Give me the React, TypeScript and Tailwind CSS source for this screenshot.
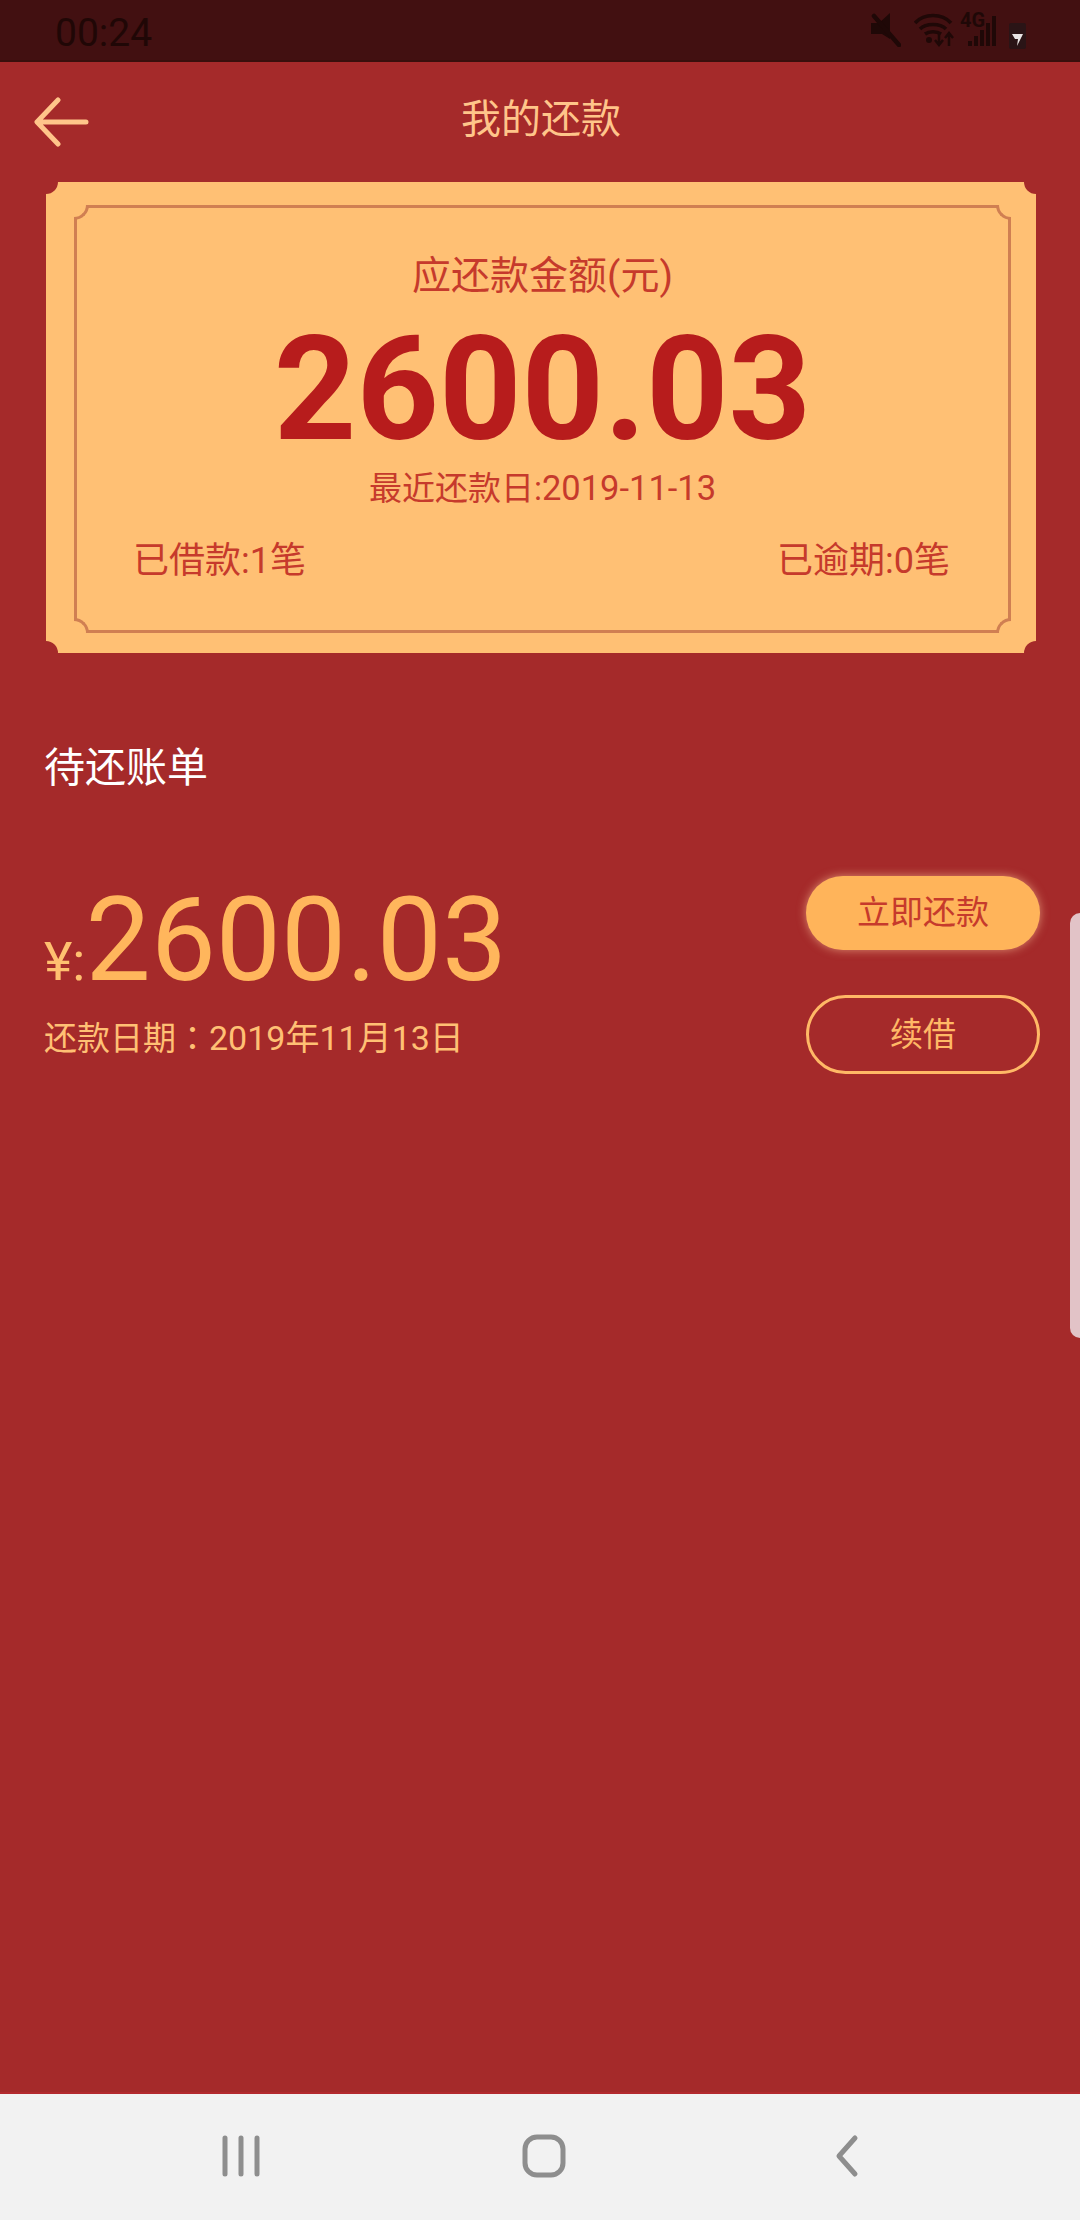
const fontStack = "font-['Roboto','Noto_Sans_CJK_SC',sans-serif]";

function StatusIcons() {
  return (
    <div className="flex items-center">
      {/* muted speaker */}
      <svg width="30" height="34" viewBox="0 0 30 34" className="mr-[13px]">
        <path d="M0 10h8l11-10v26l-8-5H0z" fill="#1f0807" />
        <path d="M3 3l25 29" stroke="#1f0807" strokeWidth="4.5" strokeLinecap="round" />
      </svg>
      {/* wifi with data arrows */}
      <svg width="40" height="34" viewBox="0 0 40 34" className="mr-[6px]">
        <path d="M1 10C10 0 28 0 37 10M6 16c6-6 20-6 26 0M11 21c4-3 12-3 16 0" fill="none" stroke="#1f0807" strokeWidth="3.5" />
        <circle cx="15" cy="27" r="3" fill="#1f0807" />
        <path d="M25 20v11M21 27l4 5 4-5M35 33V21M31 25l4-5 4 5" fill="none" stroke="#1f0807" strokeWidth="2.5" />
      </svg>
      {/* 4G and signal bars */}
      <div className="relative mr-[13px] h-[32px] w-[36px]">
        <span className="absolute left-0 top-[-3px] text-[20px] font-bold leading-[18px] text-[#1f0807]">4G</span>
        <svg width="36" height="32" viewBox="0 0 36 32" className="absolute left-0 top-0">
          <path d="M8 32v-5h4v5zM14 32V22h4v10zM20 32V16h4v16zM26 32V9h4v23zM32 32V2h4v30z" fill="#1f0807" />
        </svg>
      </div>
      {/* battery, charging */}
      <div className="mt-[12px] flex h-[26px] w-[17px] items-end justify-center rounded-[2px] bg-[#2a1416] pb-[2px]">
        <svg width="11" height="14" viewBox="0 0 11 14">
          <path d="M0 1h11L5 13l1-7H3z" fill="#e8e4e4" />
        </svg>
      </div>
    </div>
  );
}

function OuterNotches() {
  return (
    <>
      <div className="absolute left-0 top-0 h-[12px] w-[12px] rounded-br-[12px] bg-[#a52a2a]" />
      <div className="absolute right-0 top-0 h-[12px] w-[12px] rounded-bl-[12px] bg-[#a52a2a]" />
      <div className="absolute bottom-0 left-0 h-[12px] w-[12px] rounded-tr-[12px] bg-[#a52a2a]" />
      <div className="absolute bottom-0 right-0 h-[12px] w-[12px] rounded-tl-[12px] bg-[#a52a2a]" />
    </>
  );
}

function FrameNotches() {
  return (
    <>
      <div className="absolute left-[-3px] top-[-3px] h-[15px] w-[15px] rounded-br-[15px] border-b-[3px] border-r-[3px] border-[#d07f52] bg-[#ffc074]" />
      <div className="absolute right-[-3px] top-[-3px] h-[15px] w-[15px] rounded-bl-[15px] border-b-[3px] border-l-[3px] border-[#d07f52] bg-[#ffc074]" />
      <div className="absolute bottom-[-3px] left-[-3px] h-[15px] w-[15px] rounded-tr-[15px] border-r-[3px] border-t-[3px] border-[#d07f52] bg-[#ffc074]" />
      <div className="absolute bottom-[-3px] right-[-3px] h-[15px] w-[15px] rounded-tl-[15px] border-l-[3px] border-t-[3px] border-[#d07f52] bg-[#ffc074]" />
    </>
  );
}

export default function App() {
  return (
    <div className={`relative flex h-[2220px] w-[1080px] flex-col overflow-hidden bg-[#a52a2a] ${fontStack}`}>
      {/* status bar */}
      <div className="flex h-[62px] items-center justify-between border-b-2 border-[#3a0f0c] bg-[#421011] pl-[55px] pr-[54px]">
        <span className="mt-[6px] text-[39px] leading-[56px] text-[#200706]">00:24</span>
        <StatusIcons />
      </div>

      {/* title bar */}
      <div className="relative flex h-[120px] items-start justify-center">
        <svg width="56" height="50" viewBox="0 0 56 50" className="absolute left-[34px] top-[35px]">
          <path d="M52 25H4M24 3L3 25l21 22" fill="none" stroke="#ffc58a" strokeWidth="5" strokeLinecap="round" strokeLinejoin="round" />
        </svg>
        <h1 className="ml-[2px] mt-[33px] text-[40px] font-normal leading-[50px] text-[#ffc58a]">我的还款</h1>
      </div>

      {/* summary card */}
      <div className="relative ml-[46px] h-[471px] w-[990px] bg-[#ffc074] pb-[20px] pl-[28px] pr-[25px] pt-[23px]">
        <OuterNotches />
        <div className="relative flex h-[428px] flex-col items-center border-[3px] border-[#d07f52] pt-[43px] text-[#c63a2c]">
          <FrameNotches />
          <div className="text-[39px] leading-[50px]">应还款金额(元)</div>
          <div className="mt-[29px] text-[144px] font-bold leading-[120px] text-[#b71c1c]">2600.03</div>
          <div className="mt-[16px] text-[33px] leading-[44px]">
            最近还款日:<span className="text-[34.5px]">2019-11-13</span>
          </div>
          <div className="mt-[25px] flex w-full justify-between pl-[56px] pr-[58px] text-[36px] leading-[50px]">
            <span>已借款:1笔</span>
            <span>已逾期:0笔</span>
          </div>
        </div>
      </div>

      {/* pending bills */}
      <h2 className="ml-[44px] mt-[90px] text-[41px] font-normal leading-[50px] text-white">待还账单</h2>
      <div className="mt-[83px] flex items-start justify-between pl-[44px] pr-[40px]">
        <div className="mt-[4px]">
          <div className="flex h-[120px] items-baseline text-[#ffb65c]">
            <span className="text-[54px] leading-[120px] text-[#ffc070]">¥:</span>
            <span className="text-[116px] leading-[120px]">2600.03</span>
          </div>
          <div className="mt-[14px] text-[33px] leading-[44px] text-[#ffc074]">
            还款日期<span className="font-['Noto_Sans_CJK_TC',sans-serif]">：</span>
            <span className="text-[34px]">2019年11月13日</span>
          </div>
        </div>
        <div className="flex w-[234px] flex-col gap-[45px]">
          <button className="h-[74px] rounded-full bg-[#ffb45a] text-[33px] text-[#c63a2c] shadow-[0_0_10px_rgba(255,205,160,0.6)]">
            立即还款
          </button>
          <button className="h-[79px] rounded-full border-[3px] border-[#ffb866] text-[33px] text-[#ffb866]">
            续借
          </button>
        </div>
      </div>

      {/* edge panel handle */}
      <div className="absolute right-0 top-[913px] h-[425px] w-[10px] rounded-l-[10px] bg-[#e2c3c7]" />

      {/* navigation bar */}
      <div className="mt-auto flex h-[128px] items-center border-t-2 border-[#b32a2e] bg-[#f2f2f2] pb-[2px]">
        <svg width="40" height="42" viewBox="0 0 40 42" className="ml-[222px]">
          <path d="M3 3v36M19 3v36M35 3v36" stroke="#8e8e8e" strokeWidth="5" strokeLinecap="round" />
        </svg>
        <svg width="44" height="44" viewBox="0 0 44 44" className="ml-[260px]">
          <rect x="3" y="3" width="38" height="38" rx="12" fill="none" stroke="#8e8e8e" strokeWidth="5" />
        </svg>
        <svg width="28" height="44" viewBox="0 0 28 44" className="ml-[266px]">
          <path d="M23 4L7 22l16 18" fill="none" stroke="#8e8e8e" strokeWidth="5" strokeLinecap="round" strokeLinejoin="round" />
        </svg>
      </div>
    </div>
  );
}
